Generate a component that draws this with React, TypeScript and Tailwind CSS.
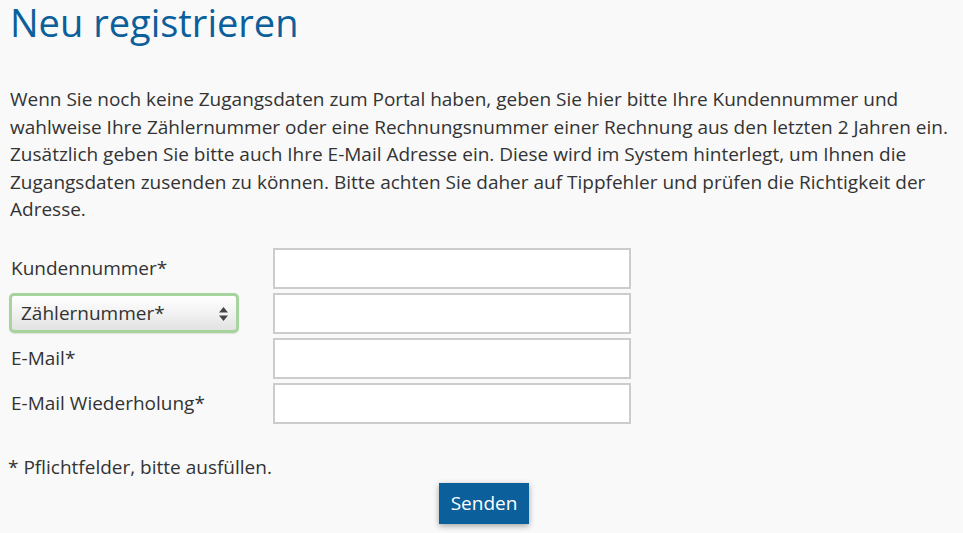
import React from "react";

const fields = ["Kundennummer*", "select", "E-Mail*", "E-Mail Wiederholung*"];

export default function App() {
  return (
    <div className="min-h-[533px] bg-[#f9f9f9] px-[10px] font-['Open_Sans',sans-serif] text-[#333]">
      <h1 className="text-[38px] leading-[44px] text-[#0b5f9a]">Neu registrieren</h1>

      <p className="mt-[42px] text-[19px] leading-[27.5px]">
        Wenn Sie noch keine Zugangsdaten zum Portal haben, geben Sie hier bitte Ihre Kundennummer und
        wahlweise Ihre Zählernummer oder eine Rechnungsnummer einer Rechnung aus den letzten 2 Jahren ein.
        Zusätzlich geben Sie bitte auch Ihre E-Mail Adresse ein. Diese wird im System hinterlegt, um Ihnen die
        Zugangsdaten zusenden zu können. Bitte achten Sie daher auf Tippfehler und prüfen die Richtigkeit der
        Adresse.
      </p>

      <div className="mt-[24px] flex flex-col gap-[4px]">
        {fields.map((f) => (
          <div key={f} className="flex items-center">
            <div className="w-[263px]">
              {f === "select" ? (
                <div className="relative -ml-[1px] flex h-[40px] w-[230px] items-center rounded-[5px] border-[3px] border-[#a6d49c] bg-gradient-to-b from-white via-[#f2f2f2] to-[#e2e2e2] pl-[9px] text-[19px] shadow-[0_1px_1px_rgba(0,0,0,0.1)]">
                  Zählernummer*
                  <svg className="absolute right-[8px] top-[11px]" width="9" height="14" viewBox="0 0 9 14">
                    <path d="M4.5 0 L9 5.5 H0 Z" fill="#444" />
                    <path d="M4.5 14 L9 8.5 H0 Z" fill="#444" />
                  </svg>
                </div>
              ) : (
                <span className="pl-[1px] text-[19px]">{f}</span>
              )}
            </div>
            <input className="h-[41px] w-[358px] border-2 border-[#cccccc] bg-white outline-none" />
          </div>
        ))}
      </div>

      <p className="mt-[30px] -ml-[2px] text-[19px] leading-[27.5px]">* Pflichtfelder, bitte ausfüllen.</p>

      <div className="mt-[1.5px] flex justify-center pl-[5px]">
        <button className="h-[41px] w-[90px] bg-[#0b5f9a] text-[19px] text-white shadow-[0_2px_6px_rgba(0,0,0,0.35)]">
          Senden
        </button>
      </div>
    </div>
  );
}
